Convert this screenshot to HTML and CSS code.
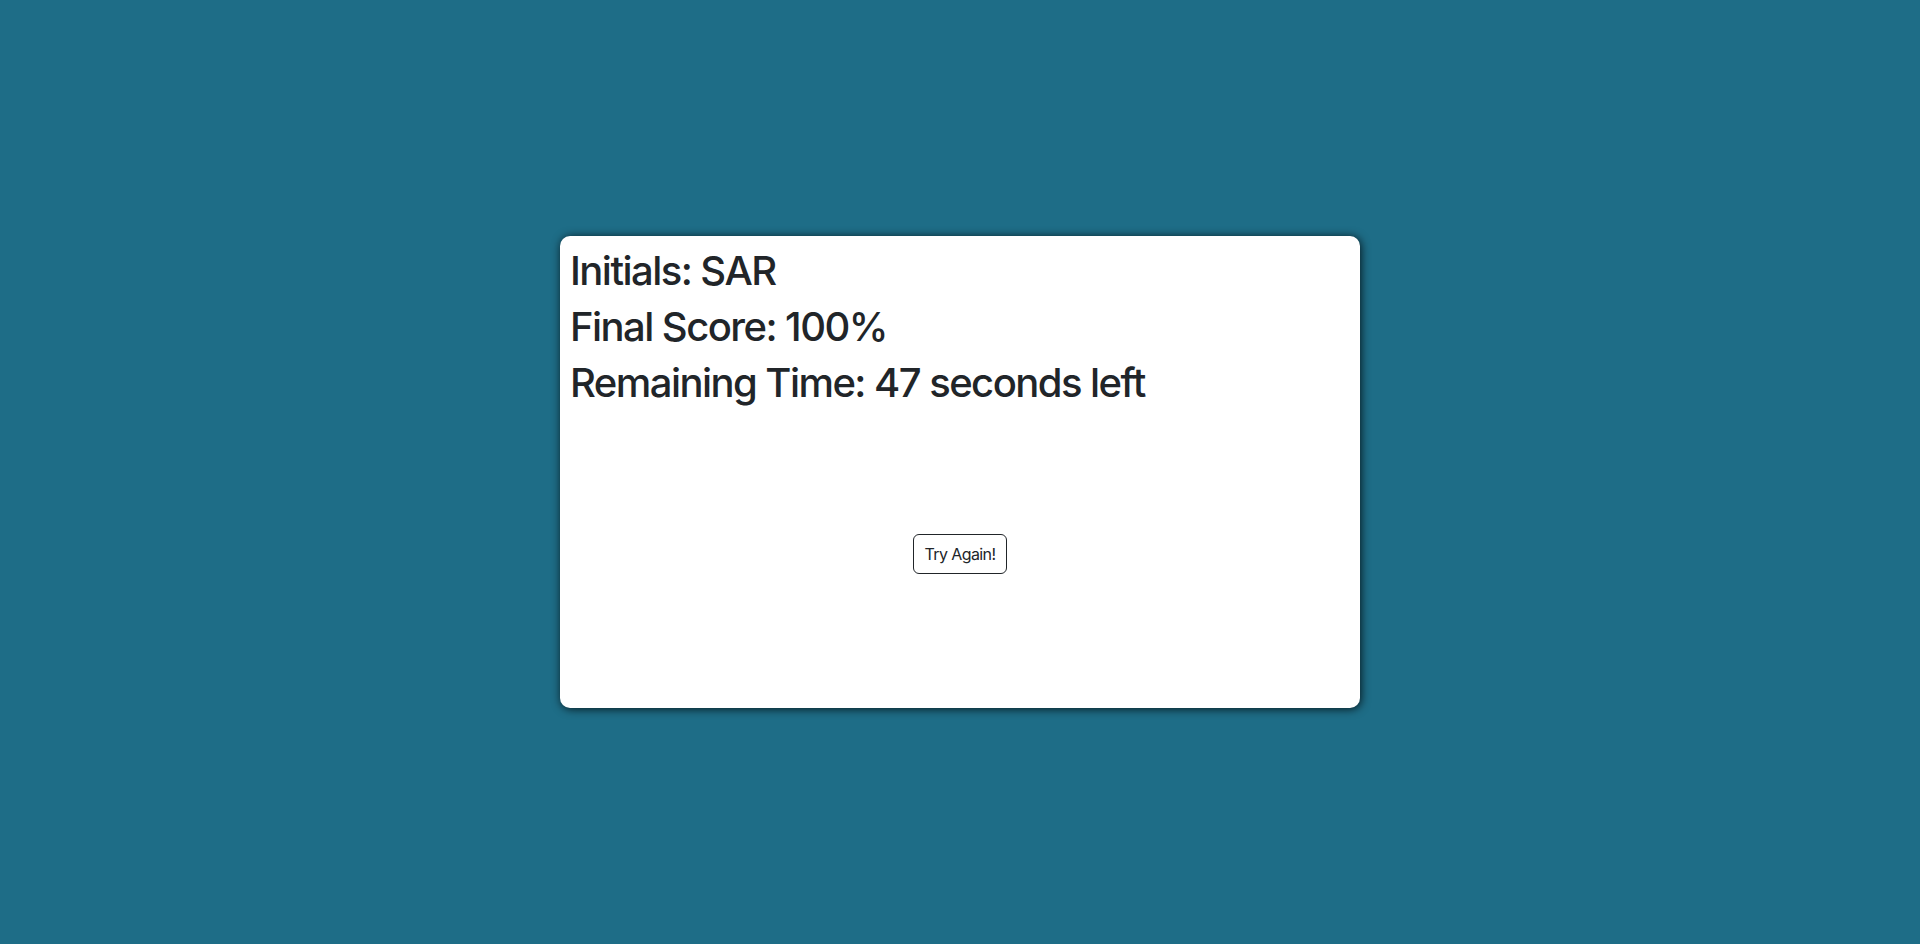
FILE: index.html
```html
<!DOCTYPE html>
<html lang="en">
<head>
<meta charset="utf-8">
<title>Quiz Results</title>
<link rel="stylesheet" href="styles.css">
</head>
<body>
<main class="page">
  <section class="card">
    <h1 class="result">Initials: SAR</h1>
    <h1 class="result">Final Score: 100%</h1>
    <h1 class="result">Remaining Time: 47 seconds left</h1>
    <div class="actions">
      <button class="btn" type="button">Try Again!</button>
    </div>
  </section>
</main>
</body>
</html>
```
FILE: styles.css
```css
* { box-sizing: border-box; }
html, body { margin: 0; padding: 0; height: 100%; }
body {
  background: #1e6d87;
  font-family: Inter, "Noto Sans", sans-serif;
  color: #212529;
}
.page {
  height: 100%;
  display: flex;
  align-items: center;
  justify-content: center;
}
.card {
  width: 800px;
  height: 472px;
  background: #fff;
  border-radius: 10px;
  box-shadow: 1px 1px 10px rgba(0, 0, 0, 0.8);
  padding: 11px 10px 10px;
  display: flex;
  flex-direction: column;
}
.result {
  margin: 0 0 8px;
  font-size: 40px;
  line-height: 48px;
  font-weight: 500;
  letter-spacing: -1.55px;
}
.result:last-of-type { margin-bottom: 0; }
.actions {
  flex: 1;
  display: flex;
  align-items: center;
  justify-content: center;
  padding-top: 2px;
}
.btn {
  font-family: Inter, "Noto Sans", sans-serif;
  font-size: 16px;
  line-height: 24px;
  padding: 7px 11px;
  letter-spacing: -0.6px;
  color: #212529;
  background: #fff;
  border: 1px solid #212529;
  border-radius: 6px;
}
```
